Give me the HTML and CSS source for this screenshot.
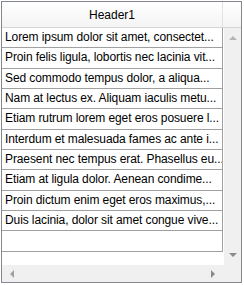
FILE: index.html
```html
<!DOCTYPE html>
<html>
<head>
    <title>Grid</title>
    <link rel="stylesheet" href="styles.css">
</head>
<body>

<div class="grid">
    <div class="header">
        <div class="header-cell">Header1</div>
        <div class="header-filler"></div>
    </div>
    <div class="middle">
        <div class="rows">
            <div class="row">Lorem ipsum dolor sit amet, consectet...</div>
            <div class="row">Proin felis ligula, lobortis nec lacinia vit...</div>
            <div class="row">Sed commodo tempus dolor, a aliqua...</div>
            <div class="row">Nam at lectus ex. Aliquam iaculis metu...</div>
            <div class="row">Etiam rutrum lorem eget eros posuere l...</div>
            <div class="row">Interdum et malesuada fames ac ante i...</div>
            <div class="row">Praesent nec tempus erat. Phasellus eu...</div>
            <div class="row">Etiam at ligula dolor. Aenean condime...</div>
            <div class="row">Proin dictum enim eget eros maximus,...</div>
            <div class="row">Duis lacinia, dolor sit amet congue vive...</div>
            <div class="row empty"></div>
        </div>
        <div class="vscroll">
            <span class="arrow up"></span>
            <span class="arrow down"></span>
        </div>
    </div>
    <div class="footer">
        <div class="hscroll">
            <span class="arrow left"></span>
            <span class="arrow right"></span>
        </div>
        <div class="corner"></div>
    </div>
</div>

</body>
</html>
```

FILE: styles.css
```css
body {
    margin: 0;
    background-color: #fff;
    font-family: "Liberation Sans", Arial, sans-serif;
    font-size: 12px;
    color: #000;
}

.grid {
    margin: 1px 0 0 1px;
    width: 241px;
    height: 282px;
    box-sizing: border-box;
    border: 1px solid #828790;
    display: flex;
    flex-direction: column;
}

.header {
    display: flex;
    height: 25px;
    flex-shrink: 0;
    background: linear-gradient(to bottom, #fff, #f4f4f4);
    border-bottom: 1px solid #d5d5d5;
}

.header-cell {
    width: 220px;
    border-right: 1px solid #e3e3e3;
    display: flex;
    align-items: center;
    justify-content: center;
    padding-top: 1px;
}

.header-filler {
    flex: 1;
}

.middle {
    flex: 1;
    display: flex;
    min-height: 0;
}

.rows {
    width: 221px;
    overflow: hidden;
}

.row {
    height: 20.33px;
    box-sizing: border-box;
    border-bottom: 1px solid #a0a0a0;
    border-right: 1px solid #a0a0a0;
    padding-left: 3px;
    line-height: 19px;
    letter-spacing: -0.1px;
    white-space: nowrap;
    overflow: hidden;
}

.vscroll {
    flex: 1;
    background-color: #f0f0f0;
    border-left: 1px solid #fff;
    display: flex;
    flex-direction: column;
    justify-content: space-between;
    align-items: center;
    padding: 8px 0 8px;
}

.footer {
    display: flex;
    height: 17px;
    flex-shrink: 0;
}

.hscroll {
    width: 221px;
    background-color: #f0f0f0;
    display: flex;
    justify-content: space-between;
    align-items: center;
    padding: 0 8px;
    box-sizing: border-box;
}

.corner {
    flex: 1;
    background-color: #f0f0f0;
}

.arrow {
    width: 0;
    height: 0;
    border-style: solid;
}

.arrow.up {
    border-width: 0 4px 4px 4px;
    border-color: transparent transparent #b4b4b4 transparent;
}

.arrow.down {
    border-width: 4px 4px 0 4px;
    border-color: #8a8a8a transparent transparent transparent;
}

.arrow.left {
    border-width: 4px 4px 4px 0;
    border-color: transparent #a0a0a0 transparent transparent;
}

.arrow.right {
    border-width: 4px 0 4px 4px;
    border-color: transparent transparent transparent #8a8a8a;
}
```
